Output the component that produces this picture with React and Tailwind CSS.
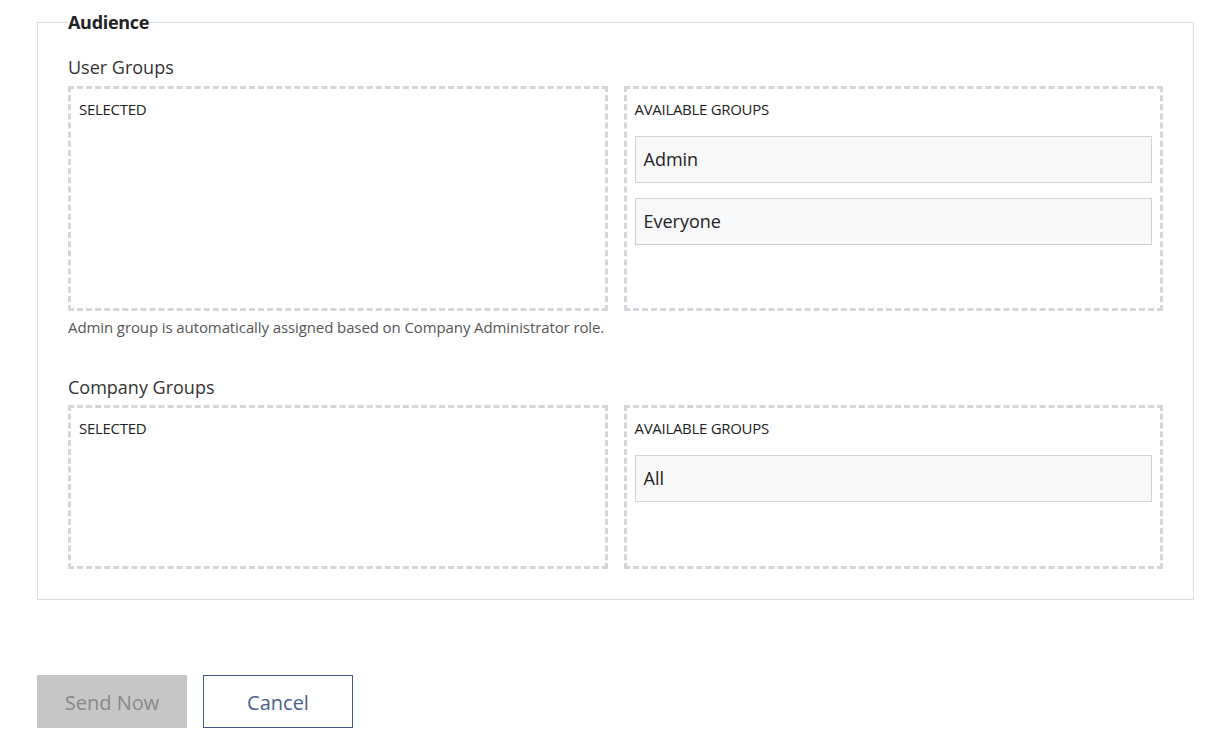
const font = {fontFamily: '"Open Sans", "Noto Sans", sans-serif'};

function GroupBox({title, items, height}) {
  return (
    <div
      className={`flex-1 border-[3px] border-dashed border-[#d4d4da] px-2 pt-[10px] ${height}`}
    >
      <div className="text-[15px] leading-5 text-[#222] uppercase tracking-[-0.3px]">
        {title}
      </div>
      <div className="mt-[17px] flex flex-col gap-[15px]">
        {items.map((item) => (
          <div
            key={item}
            className="h-[47px] flex items-center px-2 bg-[#f7f8f9] border border-[#d2d2d2] text-[18px] text-[#222]"
          >
            {item}
          </div>
        ))}
      </div>
    </div>
  );
}

function GroupPicker({label, available, height, gap}) {
  return (
    <div>
      <div className="text-[18px] leading-6 text-[#333]">{label}</div>
      <div className={`${gap} flex gap-[16px]`}>
        <GroupBox title="Selected" items={[]} height={height} />
        <GroupBox title="Available Groups" items={available} height={height} />
      </div>
    </div>
  );
}

export default function App() {
  return (
    <div className="bg-white min-h-screen pl-[37px] pr-[11px] pt-[10px]" style={font}>
      <fieldset className="border border-[#dcdcdc] px-[30px] pb-[30px]">
        <legend className="text-[18px] leading-6 font-bold text-[#222] tracking-[-0.3px]">
          Audience
        </legend>
        <div className="pt-[21px]">
          <GroupPicker
            label="User Groups"
            available={['Admin', 'Everyone']}
            height="h-[225px]"
            gap="mt-[7px]"
          />
          <p className="mt-[6px] text-[15px] leading-5 text-[#555] tracking-[-0.1px]">
            Admin group is automatically assigned based on Company Administrator role.
          </p>
          <div className="mt-[38px]">
            <GroupPicker
              label="Company Groups"
              available={['All']}
              height="h-[164px]"
              gap="mt-[6px]"
            />
          </div>
        </div>
      </fieldset>
      <div className="mt-[75px] flex gap-4">
        <button className="w-[150px] h-[53px] bg-[#c6c6c6] text-[20px] text-[#888] pt-[2px]">
          Send Now
        </button>
        <button className="w-[150px] h-[53px] border border-[#3e5a8c] bg-white text-[20px] text-[#4b5f8f] pt-[2px]">
          Cancel
        </button>
      </div>
    </div>
  );
}
